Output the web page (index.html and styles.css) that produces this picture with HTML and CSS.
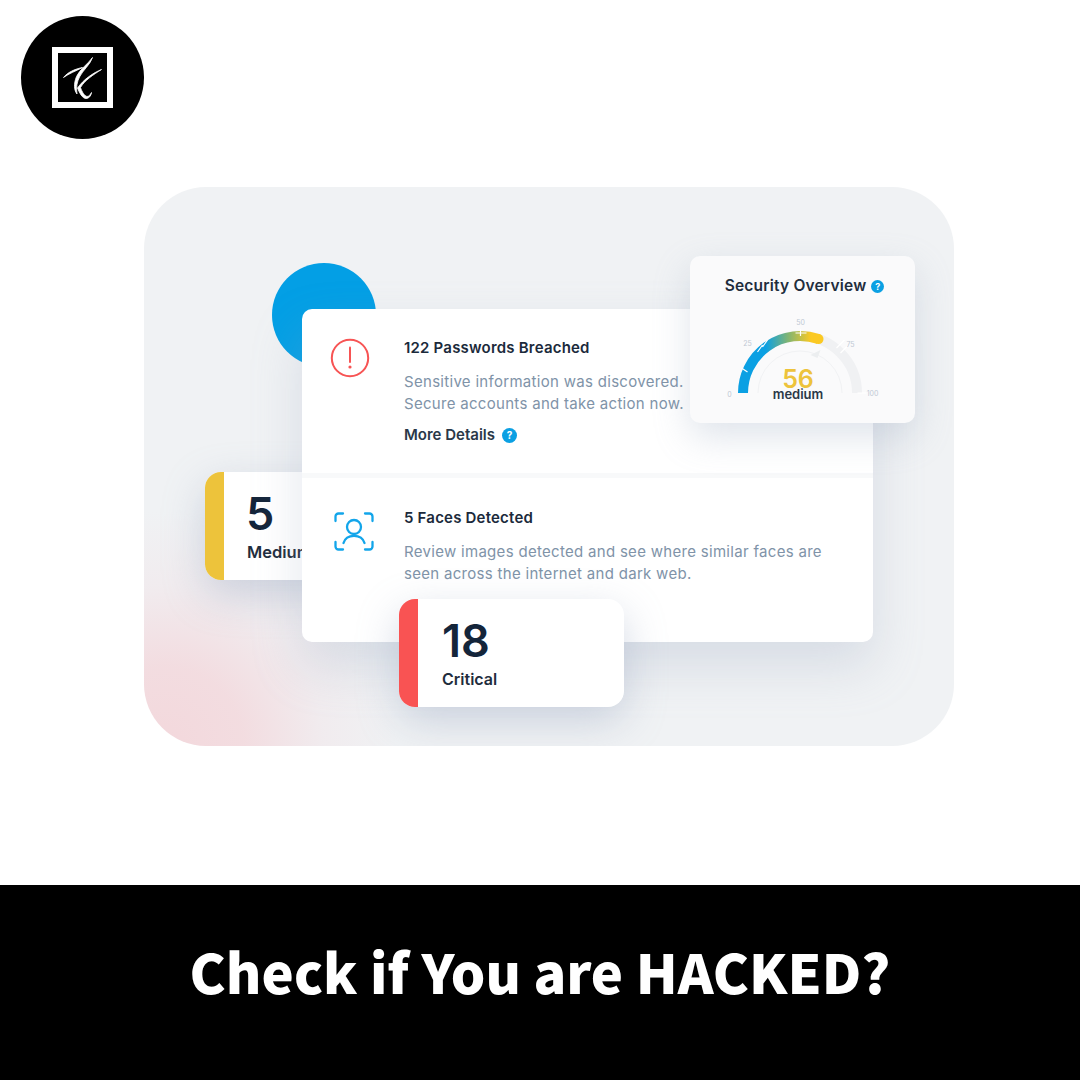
FILE: index.html
```html
<!DOCTYPE html>
<html lang="en">
<head>
<meta charset="utf-8">
<title>Check if You are HACKED?</title>
<link rel="stylesheet" href="styles.css">
</head>
<body>
<div class="page">
  <header class="top">
    <div class="logo">
      <svg class="logo-mark" viewBox="0 0 62 62" width="62" height="62">
        <rect x="3" y="3" width="55" height="55" fill="#000" stroke="#fff" stroke-width="6"/>
        <g fill="#fff" stroke="#fff" stroke-width=".8" stroke-linejoin="round">
          <path d="M11.500 30.500C16 25 23 22 30.500 20.500C24 24 17 26.500 11.500 30.500Z"/>
          <path d="M40.500 10.500C38 18 31 23 27.500 30C25 35 24 40 25 47C22 43 21.500 37 24.500 29.500C28 22 36 17 40.500 10.500Z"/>
          <path d="M49.500 22.500C41 28 33 33 28.500 40.500C30 45 32.500 49 35 49.500C37 49.500 38.500 47.500 39.500 45.500C39 49 37 51.500 34 51.500C30.500 51.500 27.500 46 25.500 41C32 32 41 26 49.500 22.500Z"/>
        </g>
      </svg>
    </div>
  </header>
  <section class="panel">
    <div class="dot"></div>
    <div class="stat stat-medium">
      <div class="stat-bar bar-yellow"></div>
      <div class="stat-body">
        <div class="stat-num">5</div>
        <div class="stat-label">Medium</div>
      </div>
    </div>
    <div class="main-card">
      <div class="row row-first">
        <svg class="row-icon" viewBox="0 0 40 40" width="40" height="40">
          <circle cx="20" cy="20" r="18.200" fill="none" stroke="#f75454" stroke-width="2"/>
          <path d="M20 9.500V24" fill="none" stroke="#f75454" stroke-width="2" stroke-linecap="round"/>
          <circle cx="20" cy="29" r="1.600" fill="#f75454"/>
        </svg>
        <div class="row-text">
          <h3 class="row-title">122 Passwords Breached</h3>
          <p class="row-desc">Sensitive information was discovered.<br>Secure accounts and take action now.</p>
          <div class="more">More Details
            <span class="help">?</span>
          </div>
        </div>
      </div>
      <div class="row row-second">
        <svg class="row-icon" viewBox="0 0 40 40" width="40" height="40">
          <path d="M1.500 9V4.500A3 3 0 0 1 4.500 1.500H9M31 1.500H35.500A3 3 0 0 1 38.500 4.500V9M1.500 30V34.500A3 3 0 0 0 4.500 37.500H9M31 37.500H35.500A3 3 0 0 0 38.500 34.500V30" fill="none" stroke="#12a5ea" stroke-width="2.300" stroke-linecap="round"/>
          <circle cx="20" cy="15" r="7" fill="none" stroke="#12a5ea" stroke-width="2.300"/>
          <path d="M9.500 31C11 26 15.500 23.800 20 23.800C24.500 23.800 29 26 30.500 31" fill="none" stroke="#12a5ea" stroke-width="2.300" stroke-linecap="round"/>
        </svg>
        <div class="row-text">
          <h3 class="row-title">5 Faces Detected</h3>
          <p class="row-desc">Review images detected and see where similar faces are<br>seen across the internet and dark web.</p>
        </div>
      </div>
    </div>
    <div class="stat stat-critical">
      <div class="stat-bar bar-red"></div>
      <div class="stat-body">
        <div class="stat-num">18</div>
        <div class="stat-label">Critical</div>
      </div>
    </div>
    <div class="overview">
      <div class="overview-head">Security Overview <span class="help help-sm">?</span></div>
      <svg class="gauge" viewBox="0 0 170 90" width="170" height="90">
        <defs>
          <linearGradient id="arc" x1="0" y1="0" x2="1" y2="0">
            <stop offset="0" stop-color="#0ba0e3"/>
            <stop offset=".3" stop-color="#0ba0e3"/>
            <stop offset=".6" stop-color="#82b572"/>
            <stop offset=".9" stop-color="#fbc923"/>
            <stop offset="1" stop-color="#fbc923"/>
          </linearGradient>
        </defs>
        <path d="M28 74A57 57 0 0 1 142 74" fill="none" stroke="#f0f1f3" stroke-width="10"/>
        <path d="M43 74A42 42 0 0 1 127 74" fill="none" stroke="#f1f2f4" stroke-width="1"/>
        <path d="M95.500 36L105.500 31L102.500 39Z" fill="#eceef0"/>
        <path d="M28 74A57 57 0 0 1 103.500 20.100" fill="none" stroke="url(#arc)" stroke-width="10"/>
        <circle cx="103.500" cy="20.100" r="5" fill="#fbc923"/>
        <path d="M26.500 49L32.500 53M42.500 33L47.500 26M47.500 28L52.500 21M80.500 14H91.500M85.500 10V17M121.500 29L129.500 21M125.500 34L133.500 26M142.500 74H151.500" fill="none" stroke="#fff" stroke-width="1.200"/>
        <text class="tick" x="14.500" y="78">0</text>
        <text class="tick" x="32.500" y="27">25</text>
        <text class="tick" x="85.500" y="6">50</text>
        <text class="tick" x="135.500" y="28">75</text>
        <text class="tick" x="157.500" y="77">100</text>
        <text class="gauge-num" x="83" y="69">56</text>
        <text class="gauge-word" x="83" y="79.500">medium</text>
      </svg>
    </div>
  </section>
  <footer class="band">
    <h1 class="headline">Check if You are HACKED?</h1>
  </footer>
</div>
</body>
</html>
```
FILE: styles.css
```css
* { box-sizing: border-box; }
html, body { margin: 0; padding: 0; }
body { background: #fff; font-family: "Inter", "Liberation Sans", sans-serif; }
.page { width: 1080px; height: 1080px; display: flex; flex-direction: column; overflow: hidden; }
.top { height: 187px; padding: 16px 0 0 21px; flex: none; }
.logo { width: 123px; height: 123px; border-radius: 50%; background: #000; display: flex; align-items: center; justify-content: center; }
.logo-mark { display: block; }
.panel {
  position: relative; flex: none; width: 810px; height: 559px; margin-left: 144px;
  border-radius: 62px; overflow: hidden;
  background:
    radial-gradient(circle at 20px 559px, rgba(243,216,220,1) 0, rgba(243,218,222,.9) 80px, rgba(242,228,232,.45) 160px, rgba(241,242,245,0) 235px),
    #f0f2f4;
}
.dot { position: absolute; left: 128px; top: 76px; width: 104px; height: 104px; border-radius: 50%; background: #039fe5; }
.main-card {
  position: absolute; left: 158px; top: 122px; width: 571px; height: 333px;
  background: #fff; border-radius: 10px; display: flex; flex-direction: column;
  box-shadow: 0 24px 50px rgba(150,165,190,.28);
}
.row { display: flex; align-items: flex-start; }
.row-first { height: 169px; flex: none; border-bottom: 5px solid #f8f9fa; padding: 29px 0 0 28px; }
.row-second { flex: 1; padding: 34px 0 0 32px; }
.row-icon { flex: none; display: block; }
.row-first .row-text { margin-left: 34px; }
.row-second .row-text { margin-left: 30px; margin-top: -4px; }
.row-title { margin: 0; font-size: 15px; font-weight: 600; line-height: 20px; color: #1b2a3b; letter-spacing: .2px; }
.row-desc { margin: 13px 0 0; font-size: 15px; line-height: 22px; color: #8093a8; letter-spacing: .3px; }
.more { display: flex; align-items: center; gap: 7px; margin-top: 10px; font-size: 15px; font-weight: 600; line-height: 20px; color: #2a3848; }
.help { width: 15px; height: 15px; border-radius: 50%; background: #0ba0e3; color: #fff; font-size: 10px; font-weight: 700; line-height: 15px; text-align: center; flex: none; }
.stat {
  position: absolute; width: 225px; height: 108px; border-radius: 16px; background: #fff; display: flex; overflow: hidden;
  box-shadow: 0 14px 40px rgba(150,165,190,.42);
}
.stat-medium { left: 61px; top: 285px; }
.stat-critical { left: 255px; top: 412px; }
.stat-bar { width: 19px; flex: none; }
.bar-yellow { background: #edc33b; }
.bar-red { background: #f95353; }
.stat-body { padding: 12px 0 0 24px; color: #14253a; }
.stat-medium .stat-body { padding-left: 22px; }
.stat-num { font-size: 45px; line-height: 60px; font-weight: 600; }
.stat-label { font-size: 16px; line-height: 18px; font-weight: 600; color: #1f2d3d; margin-top: -1px; }
.stat-medium .stat-label { font-size: 16.500px; padding-left: 1px; }
.overview {
  position: absolute; left: 546px; top: 69px; width: 225px; height: 167px;
  background: #fafafb; border-radius: 10px; padding-top: 20px;
  box-shadow: 0 14px 36px rgba(150,165,190,.3);
  display: flex; flex-direction: column; align-items: center;
}
.overview-head { display: flex; align-items: center; gap: 5px; margin-left: 4px; font-size: 15.500px; font-weight: 600; line-height: 20px; color: #1f2d3d; white-space: nowrap; letter-spacing: .2px; }
.help-sm { width: 13px; height: 13px; line-height: 13px; font-size: 9px; letter-spacing: 0; }
.gauge { display: block; margin: 23px 6px 0 0; overflow: visible; flex: none; }
.tick { font-size: 7px; fill: #c0c9d4; text-anchor: middle; }
.gauge-num { font-size: 25px; font-weight: 600; fill: #edc33b; text-anchor: middle; }
.gauge-word { font-size: 13px; font-weight: 600; fill: #2a3848; text-anchor: middle; }
.band { flex: 1; margin-top: 139px; padding-bottom: 24px; background: #000; display: flex; align-items: center; justify-content: center; }
.headline { margin: 0; font-family: "Noto Sans CJK SC", "Noto Sans", sans-serif; font-weight: 900; font-size: 54.300px; line-height: 80px; color: #fff; white-space: nowrap; }
```
